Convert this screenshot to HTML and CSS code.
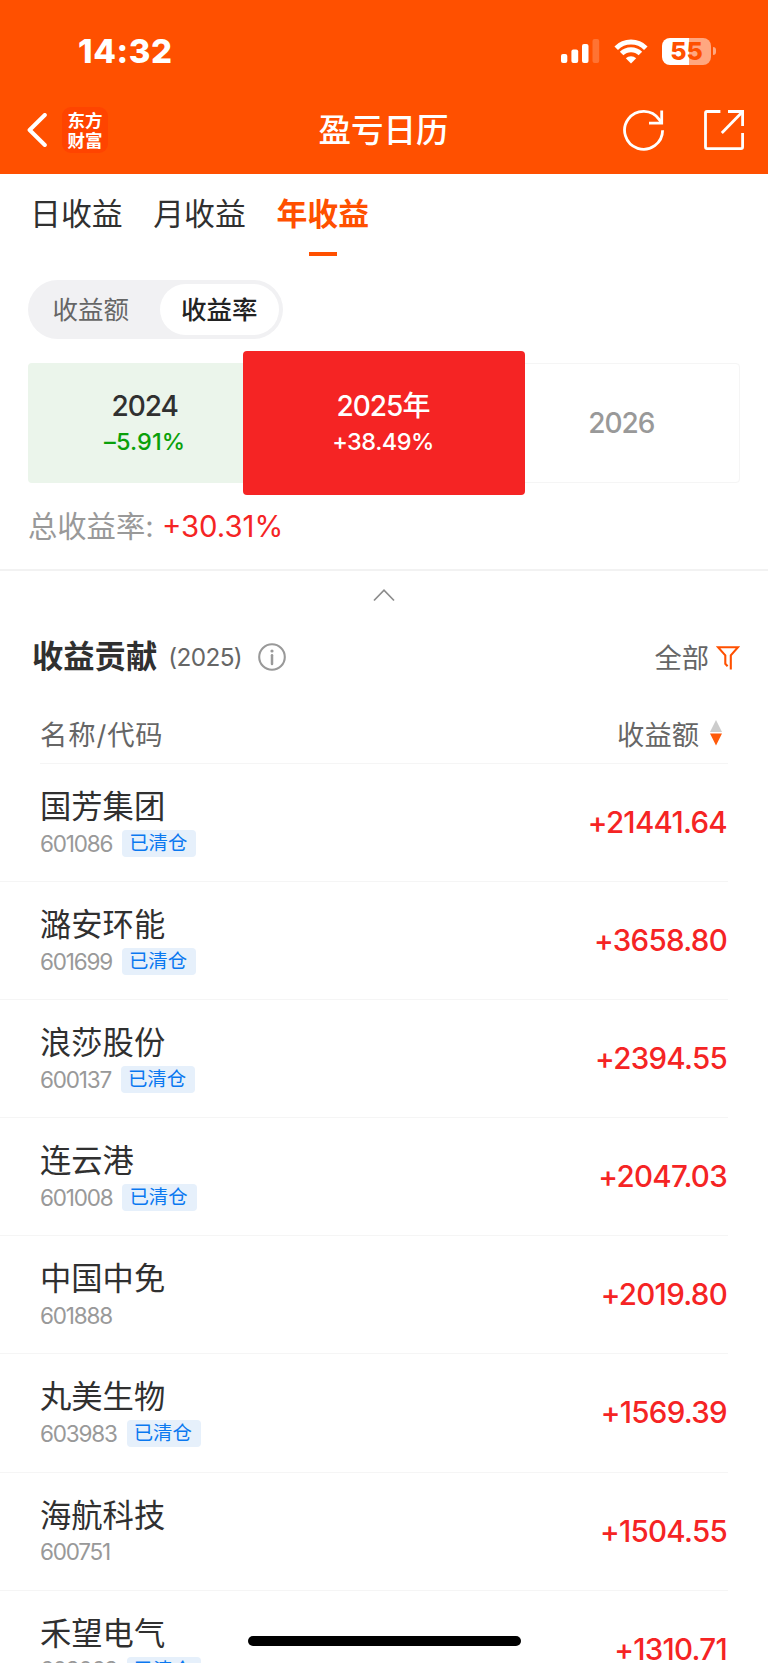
FILE: index.html
```html
<!DOCTYPE html>
<html lang="zh-CN">
<head>
    <meta charset="UTF-8">
    <title>盈亏日历</title>
    <link rel="stylesheet" href="styles.css">
</head>
<body>
    <header class="top">
        <div class="status">
            <span class="time">14:32</span>
            <div class="status-icons">
                <svg class="signal" width="39" height="24" viewBox="0 0 39 24" fill="#fff">
                    <rect x="0" y="15" width="6.3" height="9" rx="2"/>
                    <rect x="10.4" y="10.4" width="6.8" height="13.6" rx="2"/>
                    <rect x="21" y="5" width="6.5" height="19" rx="2"/>
                    <rect x="31.5" y="0" width="6.7" height="24" rx="2" opacity=".2"/>
                </svg>
                <svg class="wifi" width="34" height="25" viewBox="0 0 34 25">
                    <g fill="none" stroke="#fff" stroke-width="5">
                        <path d="M2.2 9.2A21 21 0 0 1 31.8 9.2"/>
                        <path d="M7.6 14.6A13.3 13.3 0 0 1 26.4 14.6"/>
                    </g>
                    <path d="M17 24.6L11.8 19.3A7.4 7.4 0 0 1 22.2 19.3Z" fill="#fff"/>
                </svg>
                <div class="battery">55</div>
                <i class="battery-tip"></i>
            </div>
        </div>
        <nav class="nav">
            <svg class="back" width="20" height="34" viewBox="0 0 20 34" fill="none" stroke="#fff" stroke-width="4" stroke-linecap="round" stroke-linejoin="round">
                <path d="M17.8 2L2.6 17L17.8 32"/>
            </svg>
            <div class="logo"><span>东方</span><span>财富</span></div>
            <h1>盈亏日历</h1>
            <svg class="refresh" width="42" height="42" viewBox="0 0 42 42" fill="none" stroke="#fff" stroke-width="2.8">
                <path d="M39.6 21.2A19 19 0 1 1 36.3 10.6L38.7 14.2"/>
                <path d="M38.7 1.6V14.2H26"/>
            </svg>
            <svg class="share" width="42" height="42" viewBox="0 0 42 42" fill="none" stroke="#fff" stroke-width="2.8">
                <path d="M17.4 2.5H4Q2.5 2.5 2.5 4V38Q2.5 39.6 4 39.6H38Q39.6 39.6 39.6 38V24"/>
                <path d="M25 2.5H39.6V17"/>
                <path d="M18.8 24L38.8 3.4"/>
            </svg>
        </nav>
    </header>

    <div class="tabs">
        <a class="tab">日收益</a>
        <a class="tab">月收益</a>
        <a class="tab active">年收益</a>
    </div>

    <div class="switch">
        <span>收益额</span>
        <span class="on">收益率</span>
    </div>

    <div class="years">
        <div class="year loss"><b>2024</b><em>–5.91%</em></div>
        <div class="year gain"><b>2025年</b><em>+38.49%</em></div>
        <div class="year empty"><b>2026</b></div>
    </div>

    <div class="total">总收益率: <span>+30.31%</span></div>

    <div class="fold">
        <svg width="24" height="14" viewBox="0 0 24 14" fill="none" stroke="#8c8c8c" stroke-width="1.7"><path d="M2 12.5L12 2.2L22 12.5"/></svg>
    </div>

    <div class="contrib">
        <h2>收益贡献</h2>
        <span class="contrib-year">(2025)</span>
        <svg class="info" width="28" height="28" viewBox="0 0 28 28" fill="none" stroke="#999">
            <circle cx="14" cy="14" r="12.8" stroke-width="2.1"/>
            <path d="M14 12.2V21" stroke-width="2.5" stroke-linecap="round"/>
            <circle cx="14" cy="8" r="1.6" fill="#999" stroke="none"/>
        </svg>
        <span class="filter">全部</span>
        <svg class="funnel" width="24" height="25" viewBox="0 0 24 25" fill="none" stroke="#ff5000" stroke-width="2.1">
            <path d="M11.6 21.2L9.3 18.8V10.3L2 2.2H22L14.8 10.3V24.4"/>
        </svg>
    </div>

    <div class="list-head">
        <span class="col-name">名称/代码</span>
        <span class="sort">收益额</span>
        <svg width="12" height="26" viewBox="0 0 12 26"><path d="M6 0L12 12H0Z" fill="#ccc"/><path d="M0 13.5H12L6 25.5Z" fill="#ff5a0a"/></svg>
    </div>

    <ul class="list">
        <li>
            <div><div class="name">国芳集团</div><div class="code">601086<span class="tag">已清仓</span></div></div>
            <div class="amount">+21441.64</div>
        </li>
        <li>
            <div><div class="name">潞安环能</div><div class="code">601699<span class="tag">已清仓</span></div></div>
            <div class="amount">+3658.80</div>
        </li>
        <li>
            <div><div class="name">浪莎股份</div><div class="code">600137<span class="tag">已清仓</span></div></div>
            <div class="amount">+2394.55</div>
        </li>
        <li>
            <div><div class="name">连云港</div><div class="code">601008<span class="tag">已清仓</span></div></div>
            <div class="amount">+2047.03</div>
        </li>
        <li>
            <div><div class="name">中国中免</div><div class="code">601888</div></div>
            <div class="amount">+2019.80</div>
        </li>
        <li>
            <div><div class="name">丸美生物</div><div class="code">603983<span class="tag">已清仓</span></div></div>
            <div class="amount">+1569.39</div>
        </li>
        <li>
            <div><div class="name">海航科技</div><div class="code">600751</div></div>
            <div class="amount">+1504.55</div>
        </li>
        <li>
            <div><div class="name">禾望电气</div><div class="code">603063<span class="tag">已清仓</span></div></div>
            <div class="amount">+1310.71</div>
        </li>
    </ul>

    <div class="home-bar"></div>
</body>
</html>
```
FILE: styles.css
```css
* {
    box-sizing: border-box;
}

body {
    margin: 0;
    height: 1663px;
    overflow: hidden;
    position: relative;
    background-color: #fff;
    color: #303030;
    font-family: Inter, "Noto Sans CJK SC", sans-serif;
}

svg {
    display: block;
    flex: none;
}

/* header */
.top {
    height: 173.5px;
    background-color: #ff5000;
    color: #fff;
}

.status {
    height: 87px;
    padding: 15px 52px 0 78px;
    display: flex;
    justify-content: space-between;
    align-items: center;
}

.time {
    font-size: 33px;
    font-weight: 800;
    line-height: 40px;
    letter-spacing: 0.6px;
}

.status-icons {
    display: flex;
    align-items: center;
}

.wifi {
    margin: 0 14px;
}

.battery {
    width: 49px;
    height: 27px;
    border-radius: 8px;
    background: linear-gradient(to right, #fff 55%, #ffa780 55%);
    color: #ff5000;
    font-size: 25px;
    font-weight: 800;
    line-height: 27px;
    text-align: center;
}

.battery-tip {
    width: 3px;
    height: 8px;
    margin-left: 2px;
    border-radius: 0 4px 4px 0;
    background-color: #ffa780;
}

.nav {
    height: 86px;
    padding: 0 23px 0 27px;
    display: flex;
    align-items: center;
}

.logo {
    width: 46px;
    height: 46px;
    margin-left: 15px;
    padding-top: 3px;
    border-radius: 9px;
    background-color: #ff4400;
    font-family: "Noto Sans CJK SC", sans-serif;
    font-size: 17.5px;
    font-weight: 700;
    line-height: 19.5px;
    text-align: center;
}

.logo span {
    display: block;
}

.nav h1 {
    flex: 1;
    margin: 1px 0 0 36px;
    font-size: 32.5px;
    font-weight: 500;
    line-height: 44px;
    text-align: center;
}

.refresh {
    margin-right: 38px;
}

/* tabs */
.tabs {
    height: 106.5px;
    padding: 18.5px 30px 0;
    display: flex;
    gap: 30.5px;
}

.tab {
    height: 64px;
    font-size: 30.9px;
    line-height: 44px;
}

.tab.active {
    color: #ff5000;
    font-weight: 700;
}

.tab.active::after {
    content: "";
    display: block;
    width: 28px;
    height: 4px;
    margin: 16px auto 0;
    background-color: #ff5000;
}

.switch {
    width: 255px;
    height: 59px;
    margin-left: 28px;
    padding: 4px;
    border-radius: 30px;
    display: flex;
    background-color: #f1f1f3;
    color: #666;
    font-size: 25.5px;
    line-height: 51px;
    text-align: center;
}

.switch span {
    width: 128px;
    padding-right: 10px;
}

.switch .on {
    width: 120px;
    padding: 0;
    border-radius: 26px;
    background-color: #fff;
    color: #222;
    font-weight: 500;
}

/* year cells */
.years {
    height: 120px;
    margin: 24px 28px 0;
    display: grid;
    grid-template-columns: 1fr 1fr 1fr;
}

.year {
    display: flex;
    flex-direction: column;
    align-items: center;
    justify-content: center;
    border-radius: 4px;
}

.year b {
    font-size: 28px;
    font-weight: 500;
    line-height: 38px;
    letter-spacing: -1px;
}

.year em {
    font-size: 23.5px;
    font-style: normal;
    font-weight: 500;
    line-height: 34px;
    letter-spacing: -0.5px;
}

.year.loss {
    padding-right: 4px;
    background-color: #ebf5eb;
}

.year.loss em {
    color: #0aa00a;
    letter-spacing: 0.1px;
}

.year.gain {
    margin: -12px -22px;
    padding-right: 2px;
    z-index: 1;
    background-color: #f52424;
    color: #fff;
}

.year.empty {
    border: 1px solid #f5f5f5;
    color: #999;
}

.total {
    height: 86px;
    padding: 22px 28px 0;
    color: #999;
    font-size: 29.3px;
    line-height: 44px;
}

.total span {
    color: #f52424;
}

.fold {
    height: 54px;
    border-top: 2px solid #f2f2f2;
    padding-top: 17px;
    display: flex;
    justify-content: center;
}

/* contribution list */
.contrib {
    height: 68px;
    padding: 0 28px 0 32px;
    display: flex;
    align-items: center;
    color: #666;
}

.contrib h2 {
    margin: 0;
    color: #303030;
    font-size: 31.3px;
    font-weight: 700;
    line-height: 44px;
}

.contrib-year {
    margin: 0 16px 0 11px;
    font-size: 24.3px;
    letter-spacing: -0.6px;
}

.filter {
    margin: -2px 0 0 auto;
    font-size: 27.3px;
}

.funnel {
    margin-left: 7px;
}

.list-head {
    height: 73px;
    margin: 0 40px;
    padding: 11px 6px 0 0;
    display: flex;
    align-items: center;
    border-bottom: 1px solid #f5f5f5;
    color: #666;
    font-size: 27.3px;
}

.col-name {
    letter-spacing: 0.9px;
}

.sort {
    margin-left: auto;
    margin-right: 11px;
}

.list {
    margin: 0;
    padding: 0;
    list-style: none;
}

.list li {
    width: 728px;
    height: 118.1px;
    padding: 21px 1px 0 40px;
    display: flex;
    justify-content: space-between;
    border-bottom: 1px solid #f5f5f5;
}

.name {
    font-size: 31.3px;
    line-height: 44px;
}

.code {
    height: 27px;
    margin-top: 1px;
    display: flex;
    align-items: center;
    color: #999;
    font-size: 22.5px;
    line-height: 26px;
    letter-spacing: -1.2px;
}

.tag {
    height: 27px;
    margin-left: 10px;
    padding: 0 9px 0 7px;
    border-radius: 4px;
    background-color: #e6f0fb;
    color: #0a78f0;
    font-size: 19.4px;
    line-height: 27px;
    letter-spacing: 0;
}

.amount {
    padding-top: 15px;
    color: #f52424;
    font-size: 29.5px;
    font-weight: 500;
    line-height: 45px;
    letter-spacing: -0.7px;
}

.home-bar {
    position: absolute;
    left: 248px;
    bottom: 17px;
    width: 273px;
    height: 10px;
    border-radius: 5px;
    background-color: #000;
}
```
